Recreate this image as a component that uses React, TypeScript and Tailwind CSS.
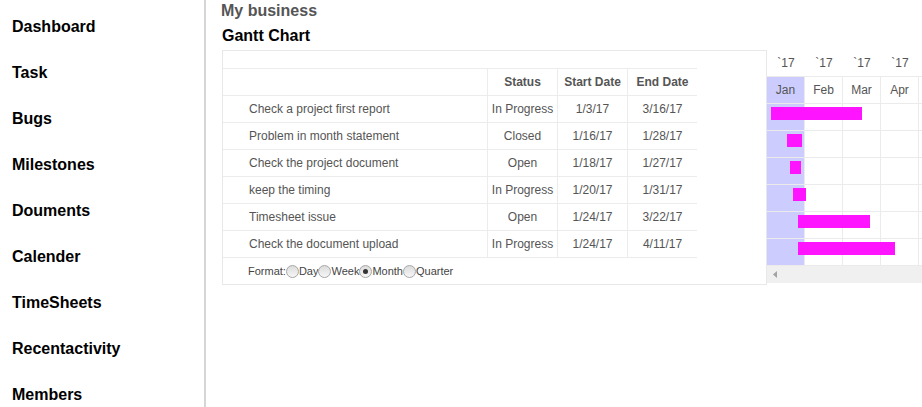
import React from "react";

const navItems = [
  "Dashboard",
  "Task",
  "Bugs",
  "Milestones",
  "Douments",
  "Calender",
  "TimeSheets",
  "Recentactivity",
  "Members",
];

const tasks = [
  { name: "Check a project first report", status: "In Progress", start: "1/3/17", end: "3/16/17", left: 4, w: 91 },
  { name: "Problem in month statement", status: "Closed", start: "1/16/17", end: "1/28/17", left: 20, w: 15 },
  { name: "Check the project document", status: "Open", start: "1/18/17", end: "1/27/17", left: 23, w: 11 },
  { name: "keep the timing", status: "In Progress", start: "1/20/17", end: "1/31/17", left: 26, w: 13 },
  { name: "Timesheet issue", status: "Open", start: "1/24/17", end: "3/22/17", left: 31, w: 72 },
  { name: "Check the document upload", status: "In Progress", start: "1/24/17", end: "4/11/17", left: 31, w: 97 },
];

const months = ["Jan", "Feb", "Mar", "Apr", ""];

function Radio({ checked }: { checked?: boolean }) {
  return (
    <span className="inline-flex w-[13px] h-[13px] rounded-full border border-[#a6a6a6] bg-gradient-to-b from-[#dcdcdc] to-[#f7f7f7] items-center justify-center shrink-0">
      {checked && <span className="w-[5px] h-[5px] rounded-full bg-[#333]" />}
    </span>
  );
}

function MonthCells() {
  return (
    <>
      {months.map((m, i) => (
        <div
          key={i}
          className={`w-[38px] shrink-0 h-full border-r border-[#ebebeb] ${i === 0 ? "bg-[#ccccff]" : ""}`}
        />
      ))}
    </>
  );
}

export default function App() {
  return (
    <div
      className="flex w-[922px] h-[407px] overflow-hidden bg-white text-black"
      style={{ fontFamily: '"Liberation Sans", Arial, sans-serif' }}
    >
      {/* Sidebar */}
      <div className="w-[206px] shrink-0 border-r-2 border-[#d6d6d6] pt-[4px]">
        {navItems.map((item) => (
          <div key={item} className="h-[46px] flex items-center pl-[12px] text-[16px] font-bold">
            {item}
          </div>
        ))}
      </div>

      {/* Main */}
      <div className="flex-1 pl-[16px]">
        <div className="mt-px h-[20px] leading-[20px] text-[16px] font-bold text-[#555] -ml-px">My business</div>
        <div className="mt-[5px] h-[20px] leading-[20px] text-[16px] font-bold">Gantt Chart</div>

        <div className="mt-[4px] flex">
          {/* Table box */}
          <div className="w-[545px] h-[235px] border border-[#e8e8e8] text-[12px] text-[#555]">
            <div className="w-[474px] h-[18px] border-b border-[#ececec]" />
            <div className="w-[474px] h-[27px] flex border-b border-[#ececec] font-bold">
              <div className="w-[264px]" />
              <div className="w-[70px] border-l border-[#ececec] flex items-center justify-center">Status</div>
              <div className="w-[70px] border-l border-[#ececec] flex items-center justify-center">Start Date</div>
              <div className="w-[70px] border-l border-[#ececec] flex items-center justify-center">End Date</div>
            </div>
            {tasks.map((t) => (
              <div key={t.name} className="w-[474px] h-[27px] flex border-b border-[#ececec]">
                <div className="w-[264px] flex items-center pl-[26px]">{t.name}</div>
                <div className="w-[70px] border-l border-[#ececec] flex items-center justify-center">{t.status}</div>
                <div className="w-[70px] border-l border-[#ececec] flex items-center justify-center">{t.start}</div>
                <div className="w-[70px] border-l border-[#ececec] flex items-center justify-center">{t.end}</div>
              </div>
            ))}
            <div className="h-[26px] flex items-center pl-[25px] text-[11px] text-[#444]">
              <span>Format:</span>
              <Radio />
              <span>Day</span>
              <Radio />
              <span>Week</span>
              <Radio checked />
              <span>Month</span>
              <Radio />
              <span>Quarter</span>
            </div>
          </div>

          {/* Chart */}
          <div className="w-[155px] shrink-0 overflow-hidden text-[12px] text-[#555]">
            <div className="h-[27px] flex border-b border-[#ebebeb]">
              {months.map((m, i) => (
                <div key={i} className="w-[38px] shrink-0 flex items-center justify-center">
                  {m ? "`17" : ""}
                </div>
              ))}
            </div>
            <div className="h-[27px] flex border-b border-[#ebebeb]">
              {months.map((m, i) => (
                <div
                  key={i}
                  className={`w-[38px] shrink-0 border-r border-[#ebebeb] flex items-center justify-center ${i === 0 ? "bg-[#ccccff]" : ""}`}
                >
                  {m}
                </div>
              ))}
            </div>
            {tasks.map((t) => (
              <div key={t.name} className="relative h-[27px] flex border-b border-[#ebebeb]">
                <MonthCells />
                <div
                  className="absolute top-[3px] h-[13px] bg-[#ff14ff]"
                  style={{ left: t.left, width: t.w }}
                />
              </div>
            ))}
            <div className="h-[17px] bg-[#f0f0f0] flex items-center pl-[6px]">
              <svg width="4" height="7" viewBox="0 0 4 7">
                <polygon points="4,0 4,7 0,3.5" fill="#a3a3a3" />
              </svg>
            </div>
          </div>
        </div>
      </div>
    </div>
  );
}
